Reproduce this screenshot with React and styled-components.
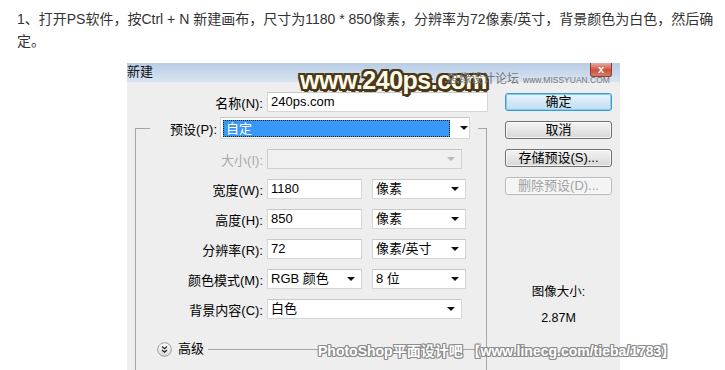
import React from "react";
import styled, { createGlobalStyle } from "styled-components";

const GlobalStyle = createGlobalStyle`
  html, body { margin: 0; padding: 0; overflow: hidden; background: #fff; }
  body { margin: 8px; font-family: "Liberation Sans", "Noto Sans CJK SC", sans-serif; }
`;

const Intro = styled.p`
  margin: 0 0 0 9px;
  font-size: 14px;
  line-height: 22px;
  color: #333;
  white-space: nowrap;
`;

const Dialog = styled.div`
  position: relative;
  margin: 11px 0 0 119px;
  width: 493px;
  height: 307px;
  background: #eeeeee;
  font-family: "Liberation Sans", "Noto Sans CJK SC", sans-serif;
  font-size: 13px;
  color: #000;
`;

const TitleBar = styled.div`
  display: flex;
  justify-content: space-between;
  align-items: flex-start;
  height: 19px;
  background: linear-gradient(#b8cce5, #d9e4f1);
`;

const Title = styled.span`
  line-height: 16px;
  padding-top: 1px;
  color: #111;
`;

const CloseBtn = styled.div`
  margin-right: 8px;
  width: 22px;
  height: 14px;
  box-sizing: border-box;
  border: 1px solid #8e3b31;
  border-top: none;
  border-radius: 0 0 3px 3px;
  background: linear-gradient(#e9aaa1, #c9503f 55%, #dc7d6e);
  color: #fff;
  font: bold 11px/13px "Liberation Sans", sans-serif;
  text-align: center;
`;

const Body = styled.div`
  display: grid;
  grid-template-columns: 352px 107px;
  column-gap: 18px;
  padding: 0 8px;
  height: 288px;
`;

const LeftCol = styled.div`
  display: flex;
  flex-direction: column;
  padding-top: 10px;
  min-height: 0;
`;

const Row = styled.div`
  display: flex;
  align-items: center;
  gap: 4px;
  height: 20px;
  flex: none;
`;

const Label = styled.label`
  flex: none;
  width: ${(p) => p.$w}px;
  text-align: right;
  white-space: nowrap;
  color: ${(p) => (p.$disabled ? "#a9a9a9" : "#000")};
`;

const Field = styled.div`
  flex: none;
  display: flex;
  align-items: center;
  box-sizing: border-box;
  width: ${(p) => p.$w}px;
  height: ${(p) => (p.$h ? p.$h : 20)}px;
  padding: 0 6px 0 ${(p) => (p.$pl != null ? p.$pl : 3)}px;
  background: ${(p) => (p.$disabled ? "#f0f0f0" : "#fff")};
  border: 1px solid ${(p) => (p.$disabled ? "#cfcfcf" : "#d6d6d6")};
  border-top-color: ${(p) => (p.$disabled ? "#c4c4c4" : "#c8c8c8")};
  white-space: nowrap;
`;

const Value = styled.span`
  flex: 1;
  line-height: 18px;
`;

const Arrow = styled.span`
  flex: none;
  width: 0;
  height: 0;
  border-left: 4px solid transparent;
  border-right: 4px solid transparent;
  border-top: 4px solid ${(p) => (p.$disabled ? "#b8b8b8" : "#111")};
`;

const Highlight = styled.span`
  flex: none;
  box-sizing: border-box;
  width: 227px;
  height: 17px;
  margin-right: 10px;
  padding-left: 2px;
  background: #3898f6;
  border: 1px dotted #1a1a1a;
  color: #fff;
  line-height: 15px;
`;

const Group = styled.fieldset`
  flex: 1;
  min-width: 0;
  margin: 5px 0 0;
  padding: 0;
  border: 1px solid #a4a4a4;
  border-bottom: none;
`;

const Legend = styled.legend`
  margin-left: 14px;
  padding: 0 8px 0 0;
`;

const LegendInner = styled.div`
  display: flex;
  align-items: center;
  gap: 3px;
  height: 22px;
`;

const Fields = styled.div`
  display: flex;
  flex-direction: column;
  gap: 10px;
  padding-top: 10px;
`;

const Advanced = styled.div`
  display: flex;
  align-items: center;
  height: 18px;
  margin-top: 21px;
  padding-left: 21px;
  padding-right: 8px;
`;

const AdvText = styled.span`
  margin-left: 6px;
  line-height: 18px;
`;

const Rule = styled.div`
  flex: 1;
  height: 1px;
  margin-left: 4px;
  background: #a4a4a4;
`;

const Spacer = styled.span`
  flex: none;
  width: 2px;
`;

const RightCol = styled.div`
  display: flex;
  flex-direction: column;
  gap: 10px;
  padding-top: 11px;
`;

const Button = styled.button`
  box-sizing: border-box;
  width: 107px;
  height: 18px;
  padding: 0;
  font: 13px/16px "Liberation Sans", "Noto Sans CJK SC", sans-serif;
  border-radius: 3px;
  color: ${(p) => (p.$variant === "disabled" ? "#a3a3a3" : "#000")};
  border: 1px solid
    ${(p) =>
      p.$variant === "primary" ? "#3c9ad0" : p.$variant === "disabled" ? "#b5b9bc" : "#707070"};
  background: ${(p) =>
    p.$variant === "primary"
      ? "linear-gradient(#eaf4fb, #d3e8f6 50%, #c2def2)"
      : p.$variant === "disabled"
      ? "#f4f4f4"
      : "linear-gradient(#f4f4f4, #e6e6e6 50%, #d6d6d6)"};
  box-shadow: ${(p) =>
    p.$variant === "primary" ? "0 0 0 1px #7fd0f0 inset" : "0 0 0 1px rgba(255,255,255,0.7) inset"};
`;

const ImageSize = styled.div`
  margin-top: 79px;
  display: flex;
  flex-direction: column;
  align-items: center;
  gap: 10px;
  line-height: 16px;
  font-size: 12.5px;
`;

const Watermark240 = styled.div`
  position: absolute;
  left: 173px;
  top: 4px;
  font: bold 25px/26px "Liberation Sans", sans-serif;
  letter-spacing: -0.5px;
  color: #fffbea;
  text-shadow: 2px 0 #4a3818, -2px 0 #4a3818, 0 2px #4a3818, 0 -2px #4a3818,
    2px 2px #4a3818, -2px -2px #4a3818, 2px -2px #4a3818, -2px 2px #4a3818,
    1px 1px #4a3818, -1px -1px #4a3818, 3px 1px #4a3818, 1px 3px #4a3818;
`;

const MissYuan = styled.div`
  position: absolute;
  left: 320px;
  top: 7px;
  display: flex;
  align-items: baseline;
  gap: 4px;
  color: #777;
  white-space: nowrap;
`;

const MissCn = styled.span`
  font: 12px/16px "Noto Sans CJK SC", sans-serif;
`;

const MissEn = styled.span`
  font: 8.5px/16px "Liberation Sans", sans-serif;
`;

const WatermarkBottom = styled.div`
  position: absolute;
  left: 191px;
  top: 279px;
  font: bold 14px/18px "Liberation Sans", "Noto Sans CJK SC", sans-serif;
  color: #fff;
  white-space: nowrap;
  text-shadow: 1px 0 #8c8c8c, -1px 0 #8c8c8c, 0 1px #8c8c8c, 0 -1px #8c8c8c,
    1px 1px #8c8c8c, -1px -1px #8c8c8c, 1px -1px #8c8c8c, -1px 1px #8c8c8c;
`;

function ChevronCircle() {
  return (
    <svg width="15" height="15" viewBox="0 0 15 15">
      <defs>
        <linearGradient id="cg" x1="0" y1="0" x2="0" y2="1">
          <stop offset="0" stopColor="#ffffff" />
          <stop offset="1" stopColor="#d8d8d8" />
        </linearGradient>
      </defs>
      <circle cx="7.5" cy="7.5" r="6.8" fill="url(#cg)" stroke="#9a9a9a" />
      <path d="M5 4.5 L7.5 6.8 L10 4.5 M5 8 L7.5 10.3 L10 8" fill="none" stroke="#222" strokeWidth="1.2" />
    </svg>
  );
}

function SelectBox({ w, value, disabled }) {
  return (
    <Field $w={w} $disabled={disabled}>
      <Value>{value}</Value>
      <Arrow $disabled={disabled} />
    </Field>
  );
}

function TextBox({ w, value }) {
  return (
    <Field $w={w}>
      <Value>{value}</Value>
    </Field>
  );
}

export default function App() {
  return (
    <>
      <GlobalStyle />
      <Intro>
        1、打开PS软件，按Ctrl + N 新建画布，尺寸为1180 * 850像素，分辨率为72像素/英寸，背景颜色为白色，然后确
        <br />
        定。
      </Intro>
      <Dialog>
        <TitleBar>
          <Title>新建</Title>
          <CloseBtn>x</CloseBtn>
        </TitleBar>
        <Body>
          <LeftCol>
            <Row>
              <Label $w={128}>名称(N):</Label>
              <TextBox w={221} value="240ps.com" />
            </Row>
            <Group>
              <Legend>
                <LegendInner>
                  <Label $w={67}>预设(P):</Label>
                  <Field $w={250} $h={22} $pl={2}>
                    <Highlight>自定</Highlight>
                    <Arrow />
                  </Field>
                </LegendInner>
              </Legend>
              <Fields>
                <Row>
                  <Label $w={127} $disabled>大小(I):</Label>
                  <SelectBox w={195} value="" disabled />
                </Row>
                <Row>
                  <Label $w={127}>宽度(W):</Label>
                  <TextBox w={95} value="1180" />
                  <Spacer />
                  <SelectBox w={94} value="像素" />
                </Row>
                <Row>
                  <Label $w={127}>高度(H):</Label>
                  <TextBox w={95} value="850" />
                  <Spacer />
                  <SelectBox w={94} value="像素" />
                </Row>
                <Row>
                  <Label $w={127}>分辨率(R):</Label>
                  <TextBox w={95} value="72" />
                  <Spacer />
                  <SelectBox w={94} value="像素/英寸" />
                </Row>
                <Row>
                  <Label $w={127}>颜色模式(M):</Label>
                  <SelectBox w={95} value="RGB 颜色" />
                  <Spacer />
                  <SelectBox w={94} value="8 位" />
                </Row>
                <Row>
                  <Label $w={127}>背景内容(C):</Label>
                  <SelectBox w={195} value="白色" />
                </Row>
              </Fields>
              <Advanced>
                <ChevronCircle />
                <AdvText>高级</AdvText>
                <Rule />
              </Advanced>
            </Group>
          </LeftCol>
          <RightCol>
            <Button $variant="primary">确定</Button>
            <Button>取消</Button>
            <Button>存储预设(S)...</Button>
            <Button $variant="disabled">删除预设(D)...</Button>
            <ImageSize>
              <span>图像大小:</span>
              <span>2.87M</span>
            </ImageSize>
          </RightCol>
        </Body>
        <Watermark240>www.240ps.com</Watermark240>
        <MissYuan>
          <MissCn>思缘设计论坛</MissCn>
          <MissEn>www.MISSYUAN.COM</MissEn>
        </MissYuan>
        <WatermarkBottom>PhotoShop平面设计吧 【www.linecg.com/tieba/1783】</WatermarkBottom>
      </Dialog>
    </>
  );
}
